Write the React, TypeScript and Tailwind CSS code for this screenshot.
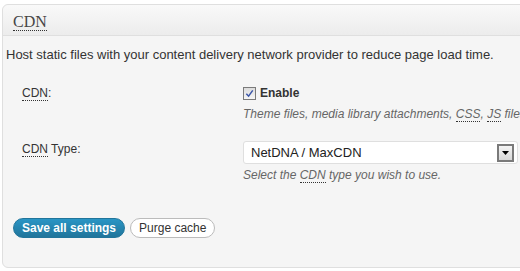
/**
 * CDN settings box — WordPress-style postbox with a header, a short
 * description, two form rows and the save / purge buttons.
 */

const sans = "font-['Liberation_Sans',Arial,sans-serif]";

function Acronym({ children }: { children: string }) {
  return (
    <span className="border-b border-dotted border-[#333]">{children}</span>
  );
}

function Checkbox() {
  return (
    <span className="inline-flex h-[13px] w-[13px] items-center justify-center border border-[#7b7b7b] bg-gradient-to-b from-[#dcdcdc] to-[#f6f6f6]">
      <svg viewBox="0 0 10 10" className="h-[9px] w-[9px]" aria-hidden>
        <path
          d="M1.5 5.2 L4 8 L8.6 1.5"
          fill="none"
          stroke="#3a55a8"
          strokeWidth="1.6"
        />
      </svg>
    </span>
  );
}

function SelectBox() {
  return (
    <div className="flex h-[23px] w-[275px] items-center justify-between rounded-[3px] border border-[#dfdfdf] bg-white pl-[7px] pr-[3px]">
      <span className="text-[13px] text-[#222]">NetDNA / MaxCDN</span>
      <span className="flex h-[18px] w-[17px] items-center justify-center border-2 border-[#7a7a7a] bg-gradient-to-b from-[#f4f4f4] to-[#d8d8d8]">
        <svg viewBox="0 0 7 4" className="h-[4px] w-[7px]" aria-hidden>
          <path d="M0 0 H7 L3.5 4 Z" fill="#000" />
        </svg>
      </span>
    </div>
  );
}

export default function App() {
  return (
    <div className={`h-[271px] w-[520px] overflow-hidden bg-white pl-[2px] pt-[4px] ${sans}`}>
      <div className="h-[264px] w-[540px] rounded-[6px] border border-[#dfdfdf] bg-[#f5f5f5]">
        <div className="h-[31px] rounded-t-[6px] border-b border-[#dfdfdf] bg-gradient-to-b from-[#f9f9f9] to-[#ececec] pl-[10px] pt-[7px]">
          <h3 className="font-['Liberation_Serif',Georgia,serif] text-[16px] leading-[19px] text-[#464646]">
            <Acronym>CDN</Acronym>
          </h3>
        </div>

        <p className="pl-[3px] pt-[11px] text-[13px] leading-[16px] text-[#333]">
          Host static files with your content delivery network provider to
          reduce page load time.
        </p>

        <div className="mt-[22px] flex text-[12px] text-[#333]">
          <div className="w-[240px] shrink-0 pl-[19px] leading-[16px]">
            <Acronym>CDN</Acronym>:
          </div>
          <div className="min-w-0 flex-1">
            <label className="flex items-center gap-[4px] leading-[16px]">
              <Checkbox />
              <span className="font-bold">Enable</span>
            </label>
            <p className="mt-[5px] whitespace-nowrap italic leading-[16px] text-[#666]">
              Theme files, media library attachments, <Acronym>CSS</Acronym>,{" "}
              <Acronym>JS</Acronym> files will be hosted with the CDN provider.
            </p>
          </div>
        </div>

        <div className="mt-[19px] flex text-[12px] text-[#333]">
          <div className="w-[240px] shrink-0 pl-[19px] leading-[16px]">
            <Acronym>CDN</Acronym> Type:
          </div>
          <div className="min-w-0 flex-1">
            <SelectBox />
            <p className="mt-[3px] italic leading-[16px] text-[#666]">
              Select the <Acronym>CDN</Acronym> type you wish to use.
            </p>
          </div>
        </div>

        <div className="mt-[35px] flex gap-[5px] pl-[10px]">
          <button
            type="button"
            className="h-[20px] rounded-full border border-[#21759b] bg-gradient-to-b from-[#2a95c5] to-[#21759b] px-[8px] text-[12px] font-bold text-white"
          >
            Save all settings
          </button>
          <button
            type="button"
            className="h-[20px] rounded-full border border-[#bbb] bg-white px-[8px] text-[12px] text-[#333]"
          >
            Purge cache
          </button>
        </div>
      </div>
    </div>
  );
}
